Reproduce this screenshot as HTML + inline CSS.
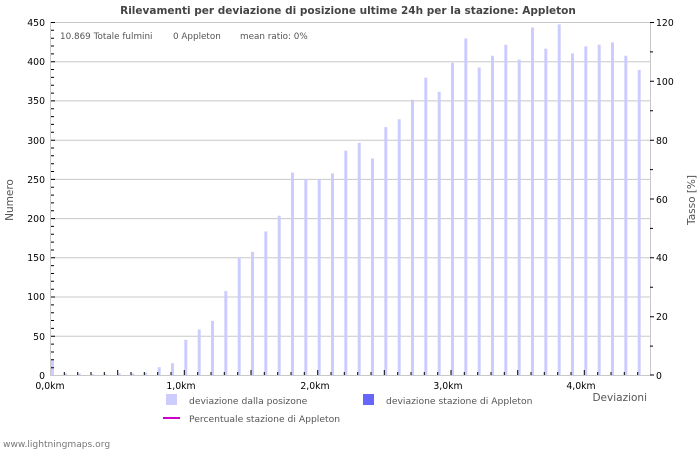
<!DOCTYPE html>
<html><head><meta charset="utf-8"><style>
html,body{margin:0;padding:0;background:#fff;}
svg{display:block;font-family:"DejaVu Sans","Liberation Sans",sans-serif;}
</style></head><body>
<svg width="700" height="450" viewBox="0 0 700 450" xmlns="http://www.w3.org/2000/svg">
<rect width="700" height="450" fill="#fff"/>
<text x="348" y="14" text-anchor="middle" font-size="10.5" font-weight="bold" fill="#444">Rilevamenti per deviazione di posizione ultime 24h per la stazione: Appleton</text>
<g stroke="#c8c8c8" stroke-width="1">
<line x1="50" y1="22.5" x2="650" y2="22.5"/>
<line x1="50" y1="61.7" x2="650" y2="61.7"/>
<line x1="50" y1="100.9" x2="650" y2="100.9"/>
<line x1="50" y1="140.2" x2="650" y2="140.2"/>
<line x1="50" y1="179.4" x2="650" y2="179.4"/>
<line x1="50" y1="218.6" x2="650" y2="218.6"/>
<line x1="50" y1="257.8" x2="650" y2="257.8"/>
<line x1="50" y1="297" x2="650" y2="297"/>
<line x1="50" y1="336.3" x2="650" y2="336.3"/>
<line x1="50.5" y1="22" x2="50.5" y2="375"/>
<line x1="650.5" y1="22" x2="650.5" y2="375"/>
<line x1="50" y1="375.5" x2="650" y2="375.5"/>
</g>
<text x="60" y="39" font-size="8.8" fill="#555">10.869 Totale fulmini</text>
<text x="173" y="39" font-size="8.8" fill="#555">0 Appleton</text>
<text x="240" y="39" font-size="8.8" fill="#555">mean ratio: 0%</text>
<g transform="translate(0,375) scale(1,-0.78444)" fill="#ccccff">
<rect x="51" y="0" width="3" height="20"/>
<rect x="64.3" y="0" width="3" height="2"/><rect x="77.7" y="0" width="3" height="2"/><rect x="91" y="0" width="3" height="1"/><rect x="104.3" y="0" width="3" height="1"/><rect x="117.7" y="0" width="3" height="2"/><rect x="131" y="0" width="3" height="2"/><rect x="144.3" y="0" width="3" height="3"/>
<rect x="157.7" y="0" width="3" height="10"/><rect x="171" y="0" width="3" height="15"/><rect x="184.3" y="0" width="3" height="45"/><rect x="197.7" y="0" width="3" height="58"/><rect x="211" y="0" width="3" height="69"/><rect x="224.3" y="0" width="3" height="107"/><rect x="237.7" y="0" width="3" height="150"/><rect x="251" y="0" width="3" height="157"/><rect x="264.3" y="0" width="3" height="183"/><rect x="277.7" y="0" width="3" height="203"/><rect x="291" y="0" width="3" height="258"/><rect x="304.3" y="0" width="3" height="250"/><rect x="317.7" y="0" width="3" height="250"/><rect x="331" y="0" width="3" height="257"/><rect x="344.3" y="0" width="3" height="286"/><rect x="357.7" y="0" width="3" height="296"/><rect x="371" y="0" width="3" height="276"/><rect x="384.3" y="0" width="3" height="316"/><rect x="397.7" y="0" width="3" height="326"/><rect x="411" y="0" width="3" height="351"/><rect x="424.3" y="0" width="3" height="379"/><rect x="437.7" y="0" width="3" height="361"/><rect x="451" y="0" width="3" height="398"/><rect x="464.3" y="0" width="3" height="429"/><rect x="477.7" y="0" width="3" height="392"/><rect x="491" y="0" width="3" height="407"/><rect x="504.3" y="0" width="3" height="421"/><rect x="517.7" y="0" width="3" height="402"/><rect x="531" y="0" width="3" height="443"/><rect x="544.3" y="0" width="3" height="416"/><rect x="557.7" y="0" width="3" height="447"/><rect x="571" y="0" width="3" height="410"/><rect x="584.3" y="0" width="3" height="419"/><rect x="597.7" y="0" width="3" height="421"/><rect x="611" y="0" width="3" height="424"/><rect x="624.3" y="0" width="3" height="407"/><rect x="637.7" y="0" width="3" height="389"/>
</g>
<g stroke="#000" stroke-width="1">
<path d="M51 22.5h4M51 30.3h3M51 38.2h3M51 46h3M51 53.9h3M51 61.7h4M51 69.5h3M51 77.4h3M51 85.2h3M51 93.1h3M51 100.9h4M51 108.8h3M51 116.6h3M51 124.4h3M51 132.3h3M51 140.2h4M51 148h3M51 155.8h3M51 163.7h3M51 171.5h3M51 179.4h4M51 187.2h3M51 195.1h3M51 202.9h3M51 210.7h3M51 218.6h4M51 226.4h3M51 234.3h3M51 242.1h3M51 250h3M51 257.8h4M51 265.6h3M51 273.5h3M51 281.3h3M51 289.2h3M51 297h4M51 304.9h3M51 312.7h3M51 320.5h3M51 328.4h3M51 336.3h4M51 344.1h3M51 352h3M51 359.8h3M51 367.7h3"/>
<path d="M650 22.5h4M650 51.9h3M650 81.3h4M650 110.8h3M650 140.2h4M650 169.6h3M650 199h4M650 228.4h3M650 257.8h4M650 287.3h3M650 316.7h4M650 346.1h3M650 375h4"/>
<path d="M64.3 375v-3M77.7 375v-3M91 375v-3M104.3 375v-3M117.7 375v-5M131 375v-3M144.3 375v-3M157.7 375v-3M171 375v-3M184.3 375v-5M197.7 375v-3M211 375v-3M224.3 375v-3M237.7 375v-3M251 375v-5M264.3 375v-3M277.7 375v-3M291 375v-3M304.3 375v-3M317.7 375v-5M331 375v-3M344.3 375v-3M357.7 375v-3M371 375v-3M384.3 375v-5M397.7 375v-3M411 375v-3M424.3 375v-3M437.7 375v-3M451 375v-5M464.3 375v-3M477.7 375v-3M491 375v-3M504.3 375v-3M517.7 375v-5M531 375v-3M544.3 375v-3M557.7 375v-3M571 375v-3M584.3 375v-5M597.7 375v-3M611 375v-3M624.3 375v-3M637.7 375v-3"/>
</g>
<g font-size="9.3" fill="#000" text-anchor="end">
<text x="45" y="26">450</text><text x="45" y="65">400</text><text x="45" y="104">350</text><text x="45" y="144">300</text><text x="45" y="183">250</text><text x="45" y="222">200</text><text x="45" y="261">150</text><text x="45" y="300">100</text><text x="45" y="340">50</text><text x="45" y="379">0</text>
</g>
<g font-size="9.3" fill="#000">
<text x="656" y="26">120</text><text x="656" y="85">100</text><text x="656" y="144">80</text><text x="656" y="203">60</text><text x="656" y="261">40</text><text x="656" y="320">20</text><text x="656" y="379">0</text>
</g>
<g font-size="9.3" fill="#000" text-anchor="middle">
<text x="50" y="389">0,0km</text><text x="181" y="389">1,0km</text><text x="315" y="389">2,0km</text><text x="448" y="389">3,0km</text><text x="581" y="389">4,0km</text>
</g>
<text x="647" y="401" font-size="10.5" fill="#555" text-anchor="end">Deviazioni</text>
<text transform="translate(13,200) rotate(-90)" font-size="10.5" fill="#555" text-anchor="middle">Numero</text>
<text transform="translate(695,200) rotate(-90)" font-size="10.5" fill="#555" text-anchor="middle">Tasso [%]</text>
<rect x="166" y="394" width="11" height="11" fill="#ccccff"/>
<text x="189" y="404" font-size="9.2" fill="#555">deviazione dalla posizone</text>
<rect x="363" y="394" width="11" height="11" fill="#6666ff"/>
<text x="386" y="404" font-size="9.2" fill="#555">deviazione stazione di Appleton</text>
<line x1="163" y1="418" x2="180" y2="418" stroke="#cc00cc" stroke-width="2"/>
<text x="189" y="422" font-size="9.2" fill="#555">Percentuale stazione di Appleton</text>
<text x="3" y="447" font-size="9.1" fill="#777">www.lightningmaps.org</text>
</svg>
</body></html>
